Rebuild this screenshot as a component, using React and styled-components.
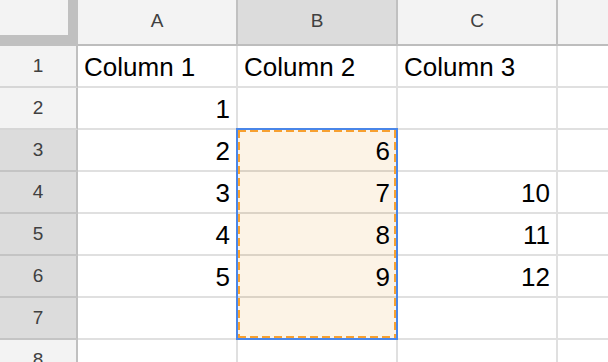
import React from "react";
import styled, { createGlobalStyle } from "styled-components";

const columns = ["A", "B", "C", ""];

const rows = [
  ["Column 1", "Column 2", "Column 3", ""],
  [1, "", "", ""],
  [2, 6, "", ""],
  [3, 7, 10, ""],
  [4, 8, 11, ""],
  [5, 9, 12, ""],
  ["", "", "", ""],
  ["", "", "", ""],
];

// selected range B3:B7 (row index 2..6, column index 1)
const isSelected = (r, c) => c === 1 && r >= 2 && r <= 6;

const App = () => {
  return (
    <>
      <GlobalStyle />
      <Sheet>
        <Grid>
          <Corner />
          {columns.map((col, i) => (
            <ColHeader key={col + i} active={i === 1}>
              {col}
            </ColHeader>
          ))}
          {rows.map((row, r) => (
            <React.Fragment key={r}>
              <RowHeader active={r >= 2 && r <= 6}>{r + 1}</RowHeader>
              {row.map((value, c) => (
                <Cell
                  key={c}
                  numeric={typeof value === "number"}
                  selected={isSelected(r, c)}
                >
                  {value}
                </Cell>
              ))}
            </React.Fragment>
          ))}
        </Grid>
        <Selection />
      </Sheet>
    </>
  );
};

const GlobalStyle = createGlobalStyle`
  body {
    margin: 0;
    background: #ffffff;
    overflow: hidden;
    font-family: "Liberation Sans", Arial, sans-serif;
  }
`;

const Sheet = styled.div`
  position: relative;
  width: 608px;
  height: 362px;
  overflow: hidden;
`;

const Grid = styled.div`
  display: grid;
  grid-template-columns: 78px repeat(4, 160px);
  grid-template-rows: 46px;
  grid-auto-rows: 42px;
`;

const Corner = styled.div`
  box-sizing: border-box;
  background: #f3f3f3;
  border-right: 10px solid #c0c0c0;
  border-bottom: 11px solid #c0c0c0;
`;

const ColHeader = styled.div`
  box-sizing: border-box;
  display: flex;
  align-items: center;
  justify-content: center;
  padding-bottom: 2px;
  background: ${(p) => (p.active ? "#dcdcdc" : "#f3f3f3")};
  border-right: 2px solid #c0c0c0;
  border-bottom: 2px solid #bdbdbd;
  color: #404040;
  font-size: 19px;
`;

const RowHeader = styled.div`
  box-sizing: border-box;
  display: flex;
  align-items: center;
  justify-content: center;
  background: ${(p) => (p.active ? "#dcdcdc" : "#f3f3f3")};
  border-right: 2px solid #c0c0c0;
  border-bottom: 2px solid ${(p) => (p.active ? "#c4c4c4" : "#d6d6d6")};
  color: #404040;
  font-size: 19px;
`;

const Cell = styled.div`
  box-sizing: border-box;
  display: flex;
  align-items: center;
  justify-content: ${(p) => (p.numeric ? "flex-end" : "flex-start")};
  padding: 2px 6px 0 6px;
  background: ${(p) => (p.selected ? "#fcf3e6" : "#ffffff")};
  border-right: 2px solid #e0e0e0;
  border-bottom: 2px solid ${(p) => (p.selected ? "#dcd3c6" : "#e0e0e0")};
  color: #000000;
  font-size: 26px;
  white-space: nowrap;
`;

const dash = (dir) =>
  `repeating-linear-gradient(${dir}, #f7a030 0 8px, transparent 8px 12px)`;

const Selection = styled.div`
  position: absolute;
  left: 236px;
  top: 128px;
  width: 162px;
  height: 212px;
  box-sizing: border-box;
  border: 2px solid #4a86e8;
  pointer-events: none;
  background: ${dash("90deg")} top left / 100% 2px no-repeat,
    ${dash("90deg")} bottom left / 100% 2px no-repeat,
    ${dash("180deg")} top left / 2px 100% no-repeat,
    ${dash("180deg")} top right / 2px 100% no-repeat;
`;

export default App;
